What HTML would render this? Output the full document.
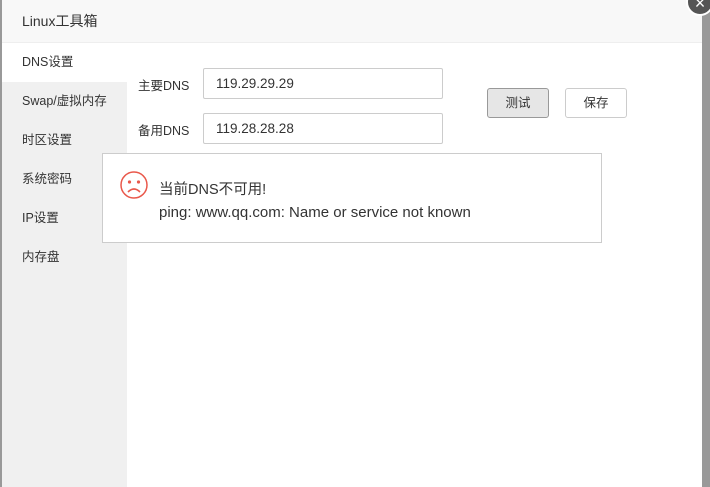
<!DOCTYPE html>
<html><head><meta charset="utf-8"><style>
*{margin:0;padding:0;box-sizing:border-box}
body{width:710px;height:487px;overflow:hidden;background:#999;position:relative;font-family:"Liberation Sans","Noto Sans CJK SC",sans-serif;font-size:13px;color:#333}
.dlg{position:absolute;left:2px;top:0;width:700px;height:487px;background:#fff}
.hd{height:43px;background:#f8f8f8;border-bottom:1px solid #eee;font-size:14px;line-height:43px;padding-left:20px;color:#333}
.side{position:absolute;left:0;top:43px;width:125px;height:444px;background:#f0f0f0}
.side div{height:39px;line-height:39px;padding-left:20px;font-size:12.5px}
.side .on{background:#fff}
.lbl{position:absolute;left:136px;font-size:12.5px}
.inp{position:absolute;left:201px;width:240px;height:31px;border:1px solid #ccc;border-radius:2px;padding-left:12px;line-height:29px;font-size:13.5px}
.btn{position:absolute;top:88px;width:62px;height:30px;border:1px solid #ccc;border-radius:3px;text-align:center;line-height:28px;font-size:12.5px}
.alert{position:absolute;left:100px;top:153px;width:500px;height:90px;border:1px solid #ccc;background:#fff}
.x{position:absolute;left:686px;top:-12px;width:28px;height:28px;border-radius:50%;background:#555;border:2px solid #fff;color:#fff;text-align:center;font-size:18px;line-height:26px}
</style></head><body>
<div class="dlg">
<div class="hd">Linux工具箱</div>
<div class="side"><div class="on">DNS设置</div><div>Swap/虚拟内存</div><div>时区设置</div><div>系统密码</div><div>IP设置</div><div>内存盘</div></div>
<div class="lbl" style="top:75px">主要DNS</div>
<div class="inp" style="top:68px">119.29.29.29</div>
<div class="lbl" style="top:120px">备用DNS</div>
<div class="inp" style="top:113px">119.28.28.28</div>
<div class="btn" style="left:485px;background:#e6e6e6;border-color:#999">测试</div>
<div class="btn" style="left:563px;background:#fff">保存</div>
<div class="alert">
<svg style="position:absolute;left:16px;top:16px" width="30" height="30" viewBox="0 0 30 30"><circle cx="15" cy="15" r="13" fill="none" stroke="#e9584b" stroke-width="1.5"/><circle cx="10.5" cy="12" r="1.6" fill="#e9584b"/><circle cx="19.5" cy="12" r="1.6" fill="#e9584b"/><path d="M9 22 Q15 16 21 22" fill="none" stroke="#e9584b" stroke-width="1.6"/></svg>
<div style="position:absolute;left:56px;top:24px;font-size:14.5px">当前DNS不可用!</div>
<div style="position:absolute;left:56px;top:50px;font-size:15px">ping: www.qq.com: Name or service not known</div>
</div>
</div>
<div class="x">×</div>
</body></html>
